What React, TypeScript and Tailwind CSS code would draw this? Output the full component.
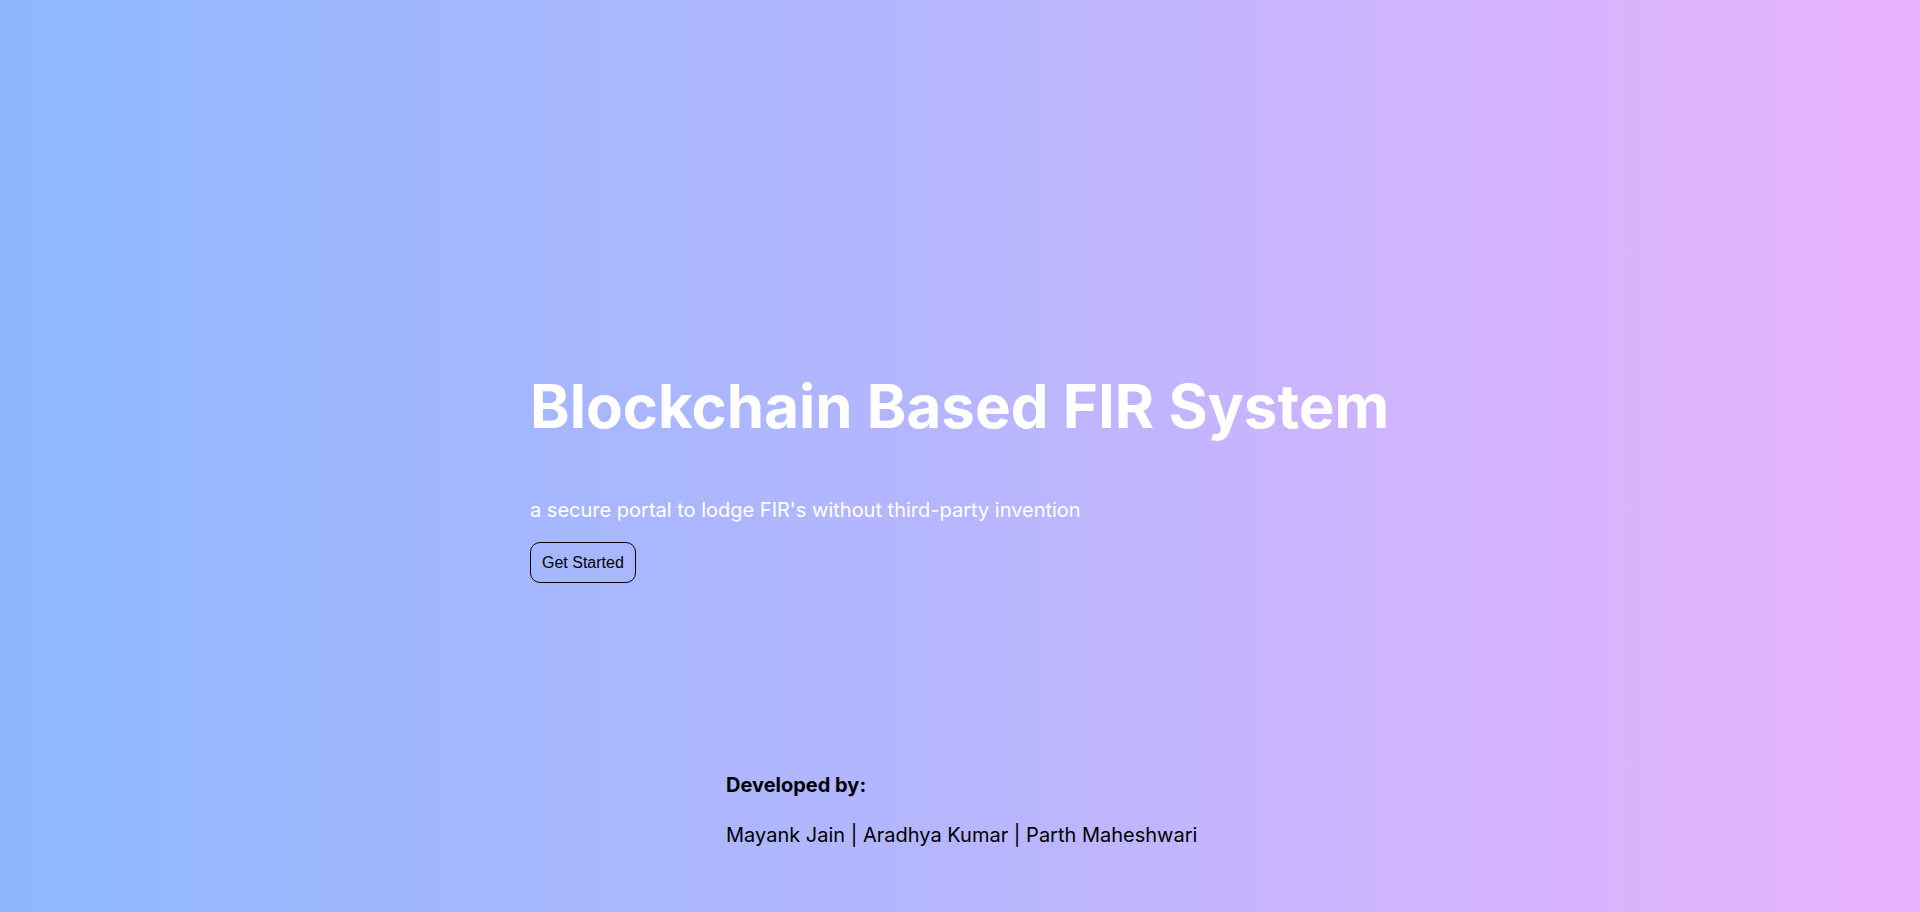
export default function App() {
  return (
    <div
      className="flex h-screen w-full flex-col bg-gradient-to-r from-[#8db8fe] via-[#b6b6fe] to-[#eab2fd]"
      style={{ fontFamily: 'Inter, "Noto Sans", sans-serif' }}
    >
      <div className="flex flex-col items-start pl-[530px] pt-[370px]">
        <h1 className="text-[60px] leading-[72px] font-bold text-white">
          Blockchain Based FIR System
        </h1>
        <p className="mt-[54px] text-[20px] leading-[28px] text-white">
          a secure portal to lodge FIR's without third-party invention
        </p>
        <button
          className="mt-[18px] h-[41px] rounded-[10px] border border-black px-[11px] text-[16px] text-black"
          style={{ fontFamily: '"Liberation Sans", Arial, sans-serif' }}
        >
          Get Started
        </button>
      </div>

      <div className="mt-[188px] flex flex-col pl-[726px] text-black">
        <p className="text-[20px] leading-[28px] font-bold">Developed by:</p>
        <p className="mt-[22px] text-[20px] leading-[28px]">
          Mayank Jain | Aradhya Kumar | Parth Maheshwari
        </p>
      </div>
    </div>
  )
}
